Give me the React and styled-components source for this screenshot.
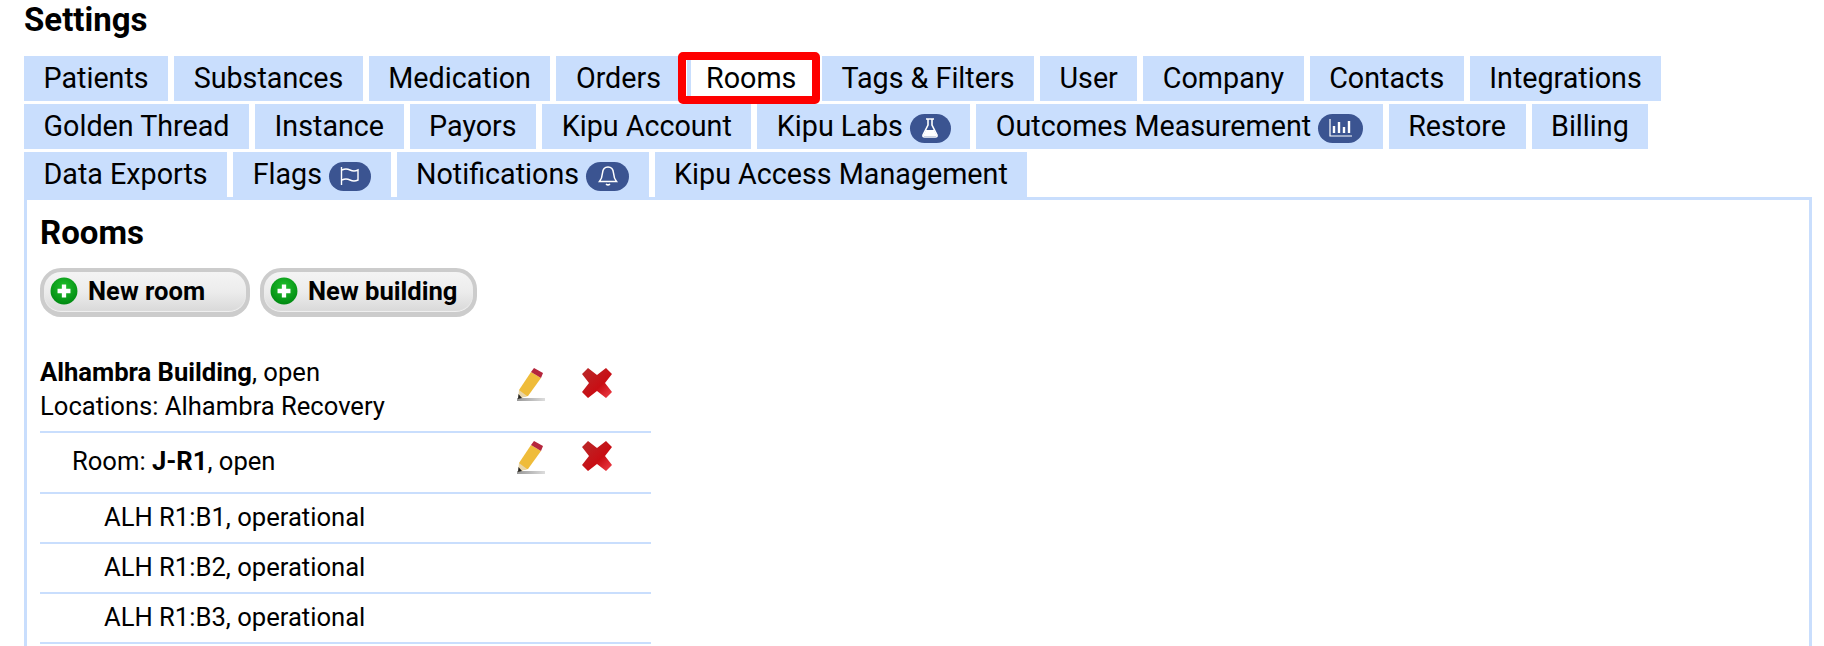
import React from "react";
import styled, { createGlobalStyle } from "styled-components";

const Global = createGlobalStyle`
  html, body { margin: 0; padding: 0; background: #fff; }
  body { font-family: Roboto, "Liberation Sans", sans-serif; color: #000; overflow: hidden; }
`;

const Page = styled.div`
  width: 1824px;
  height: 646px;
  overflow: hidden;
  box-sizing: border-box;
  padding: 0 12px 0 24px;
`;

const Title = styled.h1`
  margin: 0;
  height: 56px;
  padding-top: 3px;
  box-sizing: border-box;
  font-size: 33px;
  line-height: 34px;
  font-weight: 700;
`;

const TabBar = styled.nav`
  display: flex;
  flex-wrap: wrap;
  column-gap: 6px;
  row-gap: 3px;
`;

const Tab = styled.a`
  position: relative;
  display: flex;
  align-items: center;
  gap: 7px;
  height: 45px;
  box-sizing: border-box;
  padding: 0 19.5px 2px;
  font-size: 28.7px;
  background: ${(p) => (p.$active ? "#fff" : "#c9defd")};
  ${(p) => p.$active && `
    box-shadow: inset 4px 0 0 #c9defd;
    &::after {
      content: "";
      position: absolute;
      inset: -4px -4px -3px -9px;
      border: 8px solid #fe0000;
      border-radius: 5px;
    }
  `}
`;

const Badge = styled.span`
  display: inline-flex;
  align-items: center;
  justify-content: center;
  width: ${(p) => p.$w}px;
  height: 29px;
  margin-top: 5px;
  border-radius: 15px;
  background: #3b5491;
`;

const Panel = styled.section`
  border: 3px solid #c9defd;
  box-sizing: border-box;
  height: 500px;
  padding: 15px 13px 0;
`;

const Heading = styled.h2`
  margin: 0;
  font-size: 33px;
  line-height: 36px;
  font-weight: 700;
`;

const Actions = styled.div`
  display: flex;
  gap: 10px;
  margin-top: 17px;
`;

const ActionButton = styled.button`
  display: flex;
  align-items: center;
  gap: 10px;
  width: ${(p) => p.$w}px;
  height: 49px;
  padding: 0 0 2px 6px;
  box-sizing: border-box;
  border: 4px solid #cccccc;
  border-bottom-width: 5px;
  border-radius: 21px;
  background: linear-gradient(#f4f4f4 0%, #ececec 50%, #d8d8d8 100%);
  box-shadow: inset 0 -1px 1px #f2f2f2;
  font-family: inherit;
  font-size: 25.6px;
  font-weight: 700;
  color: #000;
`;

const RoomList = styled.div`
  width: 611px;
  margin-top: 32px;
`;

const Row = styled.div`
  display: flex;
  align-items: center;
  height: ${(p) => p.$h}px;
  padding-left: ${(p) => p.$indent}px;
  padding-bottom: ${(p) => p.$pb || 0}px;
  border-bottom: 2px solid #c9defd;
  box-sizing: border-box;
  font-size: 25.6px;
  line-height: 34px;
`;

const RowText = styled.div`
  flex: 1;
`;

const RowIcons = styled.div`
  display: flex;
  gap: 35px;
  width: 141px;
  padding-bottom: ${(p) => p.$pb}px;
  box-sizing: border-box;
`;

const Plus = () => (
  <svg width="28" height="28" viewBox="0 0 26 26">
    <defs>
      <radialGradient id="gr" cx="50%" cy="35%" r="65%">
        <stop offset="0" stopColor="#22c02c" />
        <stop offset="1" stopColor="#008a12" />
      </radialGradient>
    </defs>
    <circle cx="13" cy="13" r="12.5" fill="url(#gr)" />
    <path d="M13 7v12M7 13h12" stroke="#fff" strokeWidth="4" />
  </svg>
);

const Pencil = () => (
  <svg width="36" height="36" viewBox="0 0 36 36" style={{ filter: "blur(0.5px)" }}>
    <defs>
      <linearGradient id="sh" x1="0" x2="1" y1="0" y2="0">
        <stop offset="0" stopColor="#999" />
        <stop offset="1" stopColor="#ddd" />
      </linearGradient>
    </defs>
    <rect x="7" y="31" width="28" height="3" fill="url(#sh)" />
    <path d="M9 23 L21 5 L31 11 L18 29 L9 31Z" fill="#efbc3a" />
    <path d="M21 5 L24 1 L33 6 L31 11Z" fill="#b5263c" />
    <path d="M9 23 L8 32 L17 29Z" fill="#e8d5a8" />
    <path d="M8.500 27 L8 32 L12 31Z" fill="#222" />
  </svg>
);

const Cross = () => (
  <svg width="32" height="32" viewBox="0 0 32 32" style={{ filter: "blur(0.4px)" }}>
    <defs>
      <linearGradient id="rd" x1="0" x2="1" y1="0" y2="1">
        <stop offset="0" stopColor="#b92a2a" />
        <stop offset="0.6" stopColor="#c80e14" />
        <stop offset="1" stopColor="#f0404a" />
      </linearGradient>
    </defs>
    <path
      d="M7 1 L16 8 L25 1 L31 7 L24 16 L31 25 L25 31 L16 24 L7 31 L1 25 L8 16 L1 7Z"
      fill="url(#rd)"
    />
  </svg>
);

const Flask = () => (
  <svg width="18" height="20" viewBox="0 0 18 20">
    <path d="M5 1h8M7 1v6L2 17q-.5 2 1.500 2h11q2 0 1.500-2L11 7V1" fill="none" stroke="#fff" strokeWidth="1.6" />
    <path d="M5 12h8l3 6H2Z" fill="#fff" />
  </svg>
);

const Chart = () => (
  <svg width="24" height="20" viewBox="0 0 24 20" fill="none" stroke="#fff">
    <path d="M1 1v17h22" strokeWidth="1.2" />
    <path d="M5 15V8M10 15V4M15 15V9M20 15V3" strokeWidth="2.400" />
  </svg>
);

const Flag = () => (
  <svg width="22" height="20" viewBox="0 0 22 20" fill="none" stroke="#fff" strokeWidth="1.4">
    <path d="M2.500 1v18" />
    <path d="M3 4q4-2 8 0t8 0v10q-4 2-8 0t-8 0" />
  </svg>
);

const Bell = () => (
  <svg width="22" height="22" viewBox="0 0 22 22" fill="none" stroke="#fff" strokeWidth="1.5">
    <path d="M11 2q-5 0-5.500 6c-.3 4-1 6-3 8.500h17c-2-2.500-2.700-4.500-3-8.500Q16 2 11 2Z" />
    <path d="M9 19q2 2 4 0" fill="#fff" />
  </svg>
);

const tabs = [
  ["Patients"], ["Substances"], ["Medication"], ["Orders"], ["Rooms", null, true],
  ["Tags & Filters"], ["User"], ["Company"], ["Contacts"], ["Integrations"],
  ["Golden Thread"], ["Instance"], ["Payors"], ["Kipu Account"],
  ["Kipu Labs", [41, <Flask key="f" />]],
  ["Outcomes Measurement", [45, <Chart key="c" />]],
  ["Restore"], ["Billing"], ["Data Exports"],
  ["Flags", [42, <Flag key="g" />]],
  ["Notifications", [43, <Bell key="b" />]],
  ["Kipu Access Management"],
];

const beds = ["ALH R1:B1", "ALH R1:B2", "ALH R1:B3"];

export default function App() {
  return (
    <Page>
      <Global />
      <Title>Settings</Title>
      <TabBar>
        {tabs.map(([label, badge, active]) => (
          <Tab key={label} $active={active}>
            {label}
            {badge && <Badge $w={badge[0]}>{badge[1]}</Badge>}
          </Tab>
        ))}
      </TabBar>
      <Panel>
        <Heading>Rooms</Heading>
        <Actions>
          <ActionButton $w={210}><Plus />New room</ActionButton>
          <ActionButton $w={217}><Plus />New building</ActionButton>
        </Actions>
        <RoomList>
          <Row $h={84} $pb={2}>
            <RowText>
              <strong>Alhambra Building</strong>, open
              <br />
              Locations: Alhambra Recovery
            </RowText>
            <RowIcons $pb={8}><Pencil /><Cross /></RowIcons>
          </Row>
          <Row $h={61} $indent={32} $pb={4}>
            <RowText>Room: <strong>J-R1</strong>, open</RowText>
            <RowIcons $pb={5}><Pencil /><Cross /></RowIcons>
          </Row>
          {beds.map((b) => (
            <Row key={b} $h={50} $indent={64} $pb={2}>
              <RowText>{b}, operational</RowText>
            </Row>
          ))}
        </RoomList>
      </Panel>
    </Page>
  );
}
